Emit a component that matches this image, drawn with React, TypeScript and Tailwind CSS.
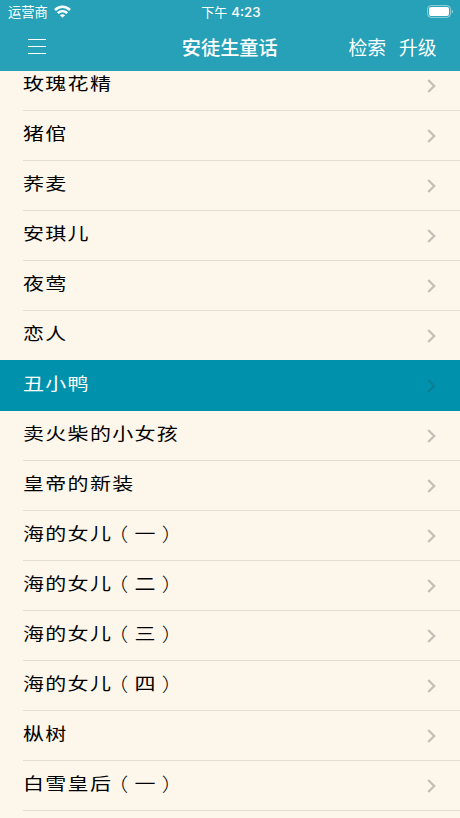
const tales = [
  { title: "玫瑰花精" },
  { title: "猪倌" },
  { title: "荞麦" },
  { title: "安琪儿" },
  { title: "夜莺" },
  { title: "恋人" },
  { title: "丑小鸭" },
  { title: "卖火柴的小女孩" },
  { title: "皇帝的新装" },
  { title: "海的女儿", part: "一" },
  { title: "海的女儿", part: "二" },
  { title: "海的女儿", part: "三" },
  { title: "海的女儿", part: "四" },
  { title: "枞树" },
  { title: "白雪皇后", part: "一" },
];

const selected = "丑小鸭";

function StatusBar() {
  return (
    <div className="flex h-6 items-center text-[13px] leading-6">
      <div className="flex flex-1 items-center gap-[6px] pl-2">
        <span className="text-[13.3px]">运营商</span>
        <svg width="17" height="13" viewBox="0 0 17 13" fill="none" stroke="currentColor" strokeWidth="2.5" className="-mt-px">
          <path d="M1 5C5.2 .8 11.8 .8 16 5" />
          <path d="M3.8 8.2C6.5 5.5 10.5 5.5 13.2 8.2" />
          <path d="M8.5 12.8 5.9 10.2C7.3 8.9 9.7 8.9 11.1 10.2Z" fill="currentColor" stroke="none" />
        </svg>
      </div>
      <div className="flex gap-1">
        <span>下午</span>
        <span className="font-['Inter','Noto_Sans_CJK_SC',sans-serif] text-[13.3px] font-medium">4:23</span>
      </div>
      <div className="flex flex-1 justify-end pr-[6px]">
        <svg width="27" height="13" viewBox="0 0 27 13" fill="none" className="-mt-px">
          <rect x=".6" y=".6" width="22.8" height="11.8" rx="3.4" stroke="#fff" strokeOpacity=".5" />
          <rect x="2" y="2" width="20" height="9" rx="2" fill="#fff" />
          <path d="M24.8 4.4v4.2c1.6-.8 1.6-3.4 0-4.2Z" fill="#fff" fillOpacity=".55" />
        </svg>
      </div>
    </div>
  );
}

function NavBar() {
  return (
    <div className="flex h-[46px] items-center text-[19.2px] leading-[46px]">
      <button type="button" aria-label="菜单" className="-mt-px flex flex-1 flex-col gap-[6px] pl-7">
        <span className="h-px w-[18px] bg-white" />
        <span className="h-px w-[18px] bg-white" />
        <span className="h-px w-[18px] bg-white" />
      </button>
      <h1 className="-ml-[5px] font-medium">安徒生童话</h1>
      <div className="flex flex-1 justify-end gap-[13px] pr-[23.5px] text-[18.8px]">
        <button type="button">检索</button>
        <button type="button">升级</button>
      </div>
    </div>
  );
}

function TaleRow({ title, part, active }: { title: string; part?: string; active: boolean }) {
  return (
    <li className={active ? "relative -mb-px h-[51px] bg-[#0092ac] pb-px pl-[23px] text-white" : "h-[50px] pl-[23px] text-black"}>
      <div
        className={
          active
            ? "flex h-full items-center justify-between border-t border-[#0092ac] pr-6"
            : "flex h-full items-center justify-between border-t border-[#e1ded4] pr-6"
        }
      >
        <span className="-mt-[5px] flex origin-center scale-y-[0.8] text-[21px] leading-none tracking-[1.3px]">
          <span>{title}</span>
          {part && (
            <>
              <span className="mr-[5px] ml-[5.5px] scale-y-110 font-light [font-feature-settings:'halt']">（</span>
              <span>{part}</span>
              <span className="ml-[5px] scale-y-110 font-light [font-feature-settings:'halt']">）</span>
            </>
          )}
        </span>
        <svg
          width="9"
          height="14"
          viewBox="0 0 9 14"
          fill="none"
          strokeWidth="2.3"
          className={active ? "stroke-[#0b7f96]" : "stroke-[#c3bfb6]"}
        >
          <path d="M1.2 1 7.2 7 1.2 13" />
        </svg>
      </div>
    </li>
  );
}

export default function App() {
  return (
    <main className="flex h-[818px] w-[460px] flex-col overflow-hidden bg-[#fdf6eb] font-['Noto_Sans_CJK_SC',sans-serif]">
      <header className="relative z-10 h-[71px] shrink-0 bg-[#26a1b7] text-white">
        <StatusBar />
        <NavBar />
      </header>
      {/* the list is scrolled, its first row sits partly under the header */}
      <ul className="-mt-[11px] shrink-0">
        {tales.map(({ title, part }) => (
          <TaleRow key={`${title}-${part}`} title={title} part={part} active={title === selected} />
        ))}
        <li className="ml-[23px] h-[50px] border-t border-[#e1ded4]" />
      </ul>
    </main>
  );
}
